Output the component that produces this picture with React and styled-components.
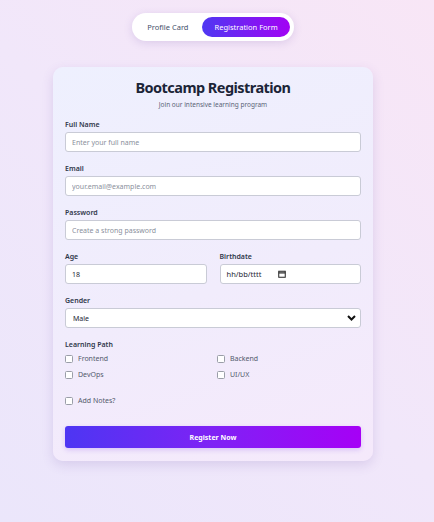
import React, { useState } from "react";
import styled, { createGlobalStyle } from "styled-components";

const GlobalStyle = createGlobalStyle`
  html, body {
    margin: 0;
    padding: 0;
  }
  body {
    font-family: "Noto Sans", "Open Sans", sans-serif;
    background: linear-gradient(45deg, #ebe6fb 0%, #f1e7fa 50%, #f8e6f6 100%);
    min-height: 522px;
  }
`;

const Page = styled.div`
  display: flex;
  flex-direction: column;
  align-items: center;
  padding: 13px 8px 0 0;
`;

const Toggle = styled.div`
  display: flex;
  align-items: center;
  gap: 3px;
  padding: 4px;
  background: #ffffff;
  border-radius: 14px;
  box-shadow: 0 2px 8px rgba(110, 80, 170, 0.18);
`;

const ToggleButton = styled.button`
  border: none;
  height: 20px;
  padding: 0 ${({ $active }) => ($active ? "12px" : "11px")};
  border-radius: 10px;
  font-family: inherit;
  font-size: 7.5px;
  cursor: pointer;
  color: ${({ $active }) => ($active ? "#ffffff" : "#44506a")};
  background: ${({ $active }) =>
    $active ? "linear-gradient(90deg, #4f38f2, #a202f4)" : "transparent"};
`;

const Card = styled.form`
  margin-top: 26px;
  width: 320px;
  box-sizing: border-box;
  padding: 10px 12px 13px;
  border-radius: 10px;
  display: flex;
  flex-direction: column;
  background: linear-gradient(160deg, #eef0fe 0%, #f1ecfc 55%, #f5e9fb 100%);
  box-shadow: 0 4px 12px rgba(100, 70, 160, 0.16);
`;

const Title = styled.h1`
  margin: 0;
  text-align: center;
  font-size: 14.5px;
  letter-spacing: -0.55px;
  line-height: 20px;
  font-weight: 700;
  color: #1b2437;
`;

const Subtitle = styled.p`
  margin: 3px 0 10px;
  text-align: center;
  font-size: 6.5px;
  line-height: 10px;
  color: #5b6478;
`;

const Fields = styled.div`
  display: flex;
  flex-direction: column;
  gap: 12px;
`;

const Field = styled.div`
  display: flex;
  flex-direction: column;
`;

const Row = styled.div`
  display: grid;
  grid-template-columns: 1fr 1fr;
  column-gap: 13px;
`;

const Label = styled.label`
  display: block;
  font-size: 7px;
  line-height: 9px;
  font-weight: 600;
  color: #2f374a;
  margin-bottom: 3px;
`;

const Input = styled.input`
  display: block;
  box-sizing: border-box;
  height: 20px;
  width: 100%;
  margin: 0;
  padding: 0 6px;
  border: 1px solid #c9cbd6;
  border-radius: 3px;
  background: #ffffff;
  font-family: inherit;
  font-size: 7px;
  color: #1d2433;
  outline: none;
  &::placeholder {
    color: #8a8f9c;
  }
`;

const DateBox = styled.div`
  box-sizing: border-box;
  height: 20px;
  display: flex;
  align-items: center;
  gap: 17px;
  padding: 0 6px;
  border: 1px solid #c9cbd6;
  border-radius: 3px;
  background: #ffffff;
  font-size: 7.5px;
  line-height: 10px;
  color: #1d2433;
`;

const SelectWrap = styled.div`
  position: relative;
  height: 20px;
`;

const Select = styled.select`
  display: block;
  box-sizing: border-box;
  height: 20px;
  width: 100%;
  margin: 0;
  padding: 0 7px;
  appearance: none;
  border: 1px solid #c9cbd6;
  border-radius: 3px;
  background: #ffffff;
  font-family: inherit;
  font-size: 7px;
  color: #1d2433;
  outline: none;
`;

const Chevron = styled.svg`
  position: absolute;
  right: 5px;
  top: 7px;
  pointer-events: none;
`;

const Group = styled.div`
  display: flex;
  flex-direction: column;
`;

const CheckGrid = styled.div`
  display: grid;
  grid-template-columns: 1fr 1fr;
  column-gap: 8px;
  row-gap: 6px;
  margin-top: 2px;
`;

const CheckLabel = styled.label`
  display: flex;
  align-items: center;
  gap: 5px;
  font-size: 7px;
  line-height: 10px;
  color: #525a6c;
  margin-top: ${({ $space }) => ($space ? "16px" : "0")};
`;

const Box = styled.span`
  box-sizing: border-box;
  width: 8px;
  height: 8px;
  border: 1px solid #9a9ea8;
  border-radius: 1.5px;
  background: #ffffff;
`;

const Submit = styled.button`
  width: 100%;
  height: 22px;
  margin-top: 20px;
  border: none;
  border-radius: 3px;
  background: linear-gradient(90deg, #4d36f3 0%, #7f22f5 50%, #a600f6 100%);
  color: #ffffff;
  font-family: inherit;
  font-size: 7px;
  font-weight: 700;
  box-shadow: 0 2px 5px rgba(110, 40, 230, 0.2);
  cursor: pointer;
`;

function Check({ children, space }) {
  return (
    <CheckLabel $space={space}>
      <Box />
      {children}
    </CheckLabel>
  );
}

export default function App() {
  const [tab, setTab] = useState("form");

  return (
    <>
      <GlobalStyle />
      <Page>
        <Toggle>
          <ToggleButton $active={tab === "profile"} onClick={() => setTab("profile")}>
            Profile Card
          </ToggleButton>
          <ToggleButton $active={tab === "form"} onClick={() => setTab("form")}>
            Registration Form
          </ToggleButton>
        </Toggle>

        <Card onSubmit={(e) => e.preventDefault()}>
          <Title>Bootcamp Registration</Title>
          <Subtitle>Join our intensive learning program</Subtitle>

          <Fields>
            <Field>
              <Label>Full Name</Label>
              <Input placeholder="Enter your full name" />
            </Field>
            <Field>
              <Label>Email</Label>
              <Input placeholder="your.email@example.com" />
            </Field>
            <Field>
              <Label>Password</Label>
              <Input type="password" placeholder="Create a strong password" />
            </Field>

            <Row>
              <Field>
                <Label>Age</Label>
                <Input defaultValue="18" />
              </Field>
              <Field>
                <Label>Birthdate</Label>
                <DateBox>
                  <span>hh/bb/tttt</span>
                  <svg width="8" height="8" viewBox="0 0 8 8">
                    <rect x="0.75" y="1.25" width="6.5" height="6" fill="none" stroke="#222" strokeWidth="1" />
                    <line x1="0.75" y1="2.9" x2="7.25" y2="2.9" stroke="#222" strokeWidth="1.2" />
                  </svg>
                </DateBox>
              </Field>
            </Row>

            <Field>
              <Label>Gender</Label>
              <SelectWrap>
                <Select defaultValue="male">
                  <option value="male">Male</option>
                  <option value="female">Female</option>
                </Select>
                <Chevron width="9" height="6" viewBox="0 0 9 6">
                  <path d="M1 1 L4.5 4.5 L8 1" fill="none" stroke="#111" strokeWidth="2" />
                </Chevron>
              </SelectWrap>
            </Field>

            <Group>
              <Label as="div">Learning Path</Label>
              <CheckGrid>
                <Check>Frontend</Check>
                <Check>Backend</Check>
                <Check>DevOps</Check>
                <Check>UI/UX</Check>
              </CheckGrid>
              <Check space>Add Notes?</Check>
            </Group>
          </Fields>

          <Submit type="submit">Register Now</Submit>
        </Card>
      </Page>
    </>
  );
}
